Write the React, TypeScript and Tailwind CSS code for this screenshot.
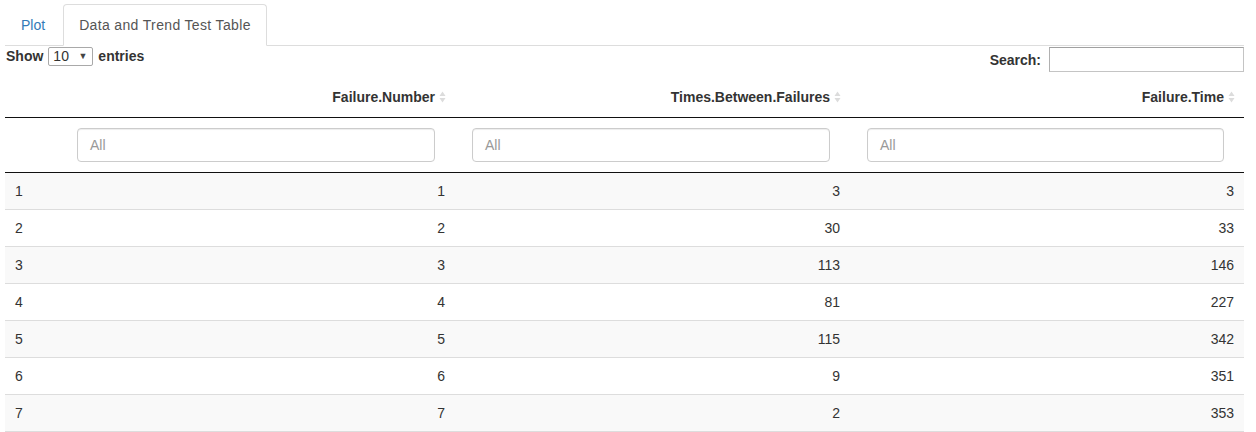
import React from 'react';

const rows = [
  [1, 1, 3, 3],
  [2, 2, 30, 33],
  [3, 3, 113, 146],
  [4, 4, 81, 227],
  [5, 5, 115, 342],
  [6, 6, 9, 351],
  [7, 7, 2, 353],
];

const columns = ['Failure.Number', 'Times.Between.Failures', 'Failure.Time'];

function SortIcon() {
  return (
    <svg width="9" height="14" viewBox="0 0 9 14" className="absolute right-[8px] top-1/2 -translate-y-1/2">
      <path d="M4.5 1.5 L7.5 6 L1.5 6 Z" fill="#dcdcdc" />
      <path d="M4.5 12.5 L7.5 8 L1.5 8 Z" fill="#dcdcdc" />
    </svg>
  );
}

export default function App() {
  return (
    <div className="min-h-screen bg-white text-[14px] leading-[20px] text-[#333]" style={{ fontFamily: '"Liberation Sans", Arial, sans-serif' }}>
      <div className="ml-[5px] w-[1239px] pt-[4px]">
        <ul className="flex border-b border-[#ddd]">
          <li className="-mb-px mr-[2px]">
            <a className="block rounded-t border border-transparent px-[15px] py-[10px] text-[#337ab7]">Plot</a>
          </li>
          <li className="-mb-px">
            <a className="block rounded-t border border-[#ddd] border-b-white bg-white px-[15px] py-[10px] tracking-[0.35px] text-[#555]">
              Data and Trend Test Table
            </a>
          </li>
        </ul>

        <div className="flex items-start justify-between">
          <label className="flex items-center gap-[5px] font-bold">
            <span className="ml-px">Show</span>
            <span className="flex h-[19px] w-[45px] items-center justify-between rounded-[2px] border border-[#a9a9a9] bg-white pl-[4px] pr-[5px] font-normal">
              <span className="leading-none">10</span>
              <span className="text-[9px] leading-none text-[#444]">▼</span>
            </span>
            <span>entries</span>
          </label>
          <label className="flex items-center gap-[8px] pt-[1px] font-bold">
            <span>Search:</span>
            <span className="block h-[25px] w-[195px] border border-[#c4c4c4] border-t-[#a0a0a0] border-l-[#b0b0b0] bg-white" />
          </label>
        </div>

        <table className="mt-[5px] w-full table-fixed border-collapse">
          <colgroup>
            <col className="w-[55px]" />
            <col className="w-[395px]" />
            <col className="w-[395px]" />
            <col />
          </colgroup>
          <thead>
            <tr className="border-b border-[#111]">
              <th className="px-[10px] py-[10px]" />
              {columns.map(c => (
                <th key={c} className="relative py-[10px] pl-[10px] pr-[20px] text-right font-bold">
                  {c}
                  <SortIcon />
                </th>
              ))}
            </tr>
            <tr className="border-b border-[#111]">
              <td className="py-[10px]" />
              {columns.map(c => (
                <td key={c} className="pb-[10px] pl-[17px] pr-[20px] pt-[10px]">
                  <div className="flex h-[34px] w-full items-center rounded border border-[#ccc] bg-white px-[12px] text-[#999] shadow-[inset_0_1px_1px_rgba(0,0,0,0.075)]">
                    All
                  </div>
                </td>
              ))}
            </tr>
          </thead>
          <tbody>
            {rows.map((r, i) => (
              <tr key={i} className={`border-b border-[#ddd] ${i % 2 === 0 ? 'bg-[#f9f9f9]' : 'bg-white'}`}>
                <td className="px-[10px] py-[8px]">{r[0]}</td>
                <td className="px-[10px] py-[8px] text-right">{r[1]}</td>
                <td className="px-[10px] py-[8px] text-right">{r[2]}</td>
                <td className="px-[10px] py-[8px] text-right">{r[3]}</td>
              </tr>
            ))}
          </tbody>
        </table>
      </div>
    </div>
  );
}
